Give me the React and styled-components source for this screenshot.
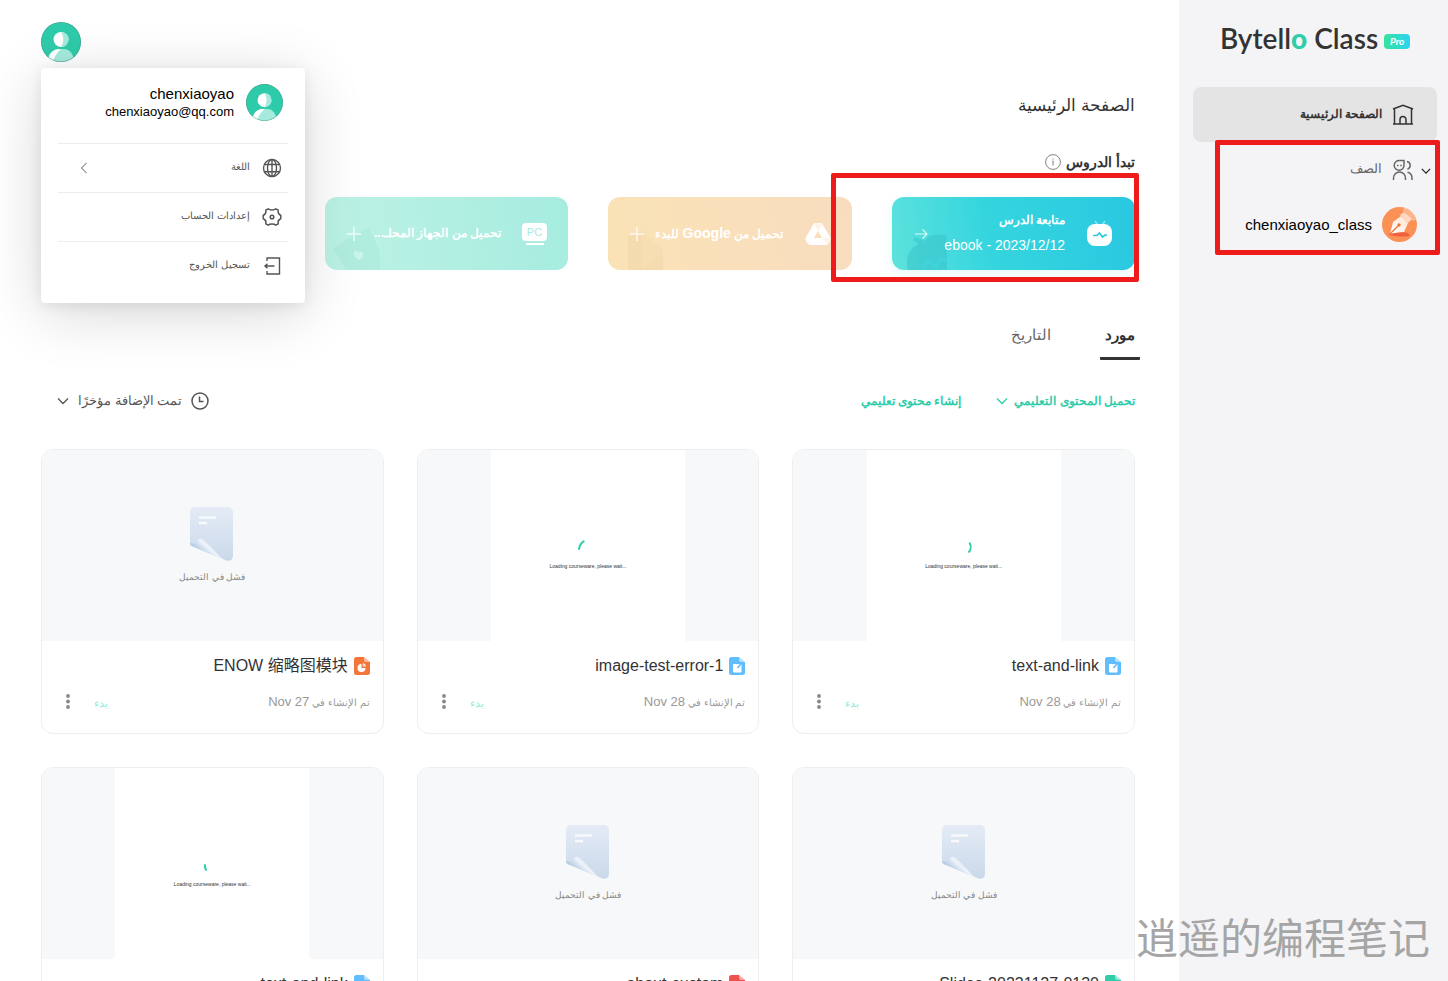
import React from 'react';
import styled, { createGlobalStyle, css } from 'styled-components';

const GlobalStyle = createGlobalStyle`
  *, *::before, *::after { box-sizing: border-box; }
  body {
    margin: 0;
    background: #fff;
    color: #333;
    font-family: "Liberation Sans", "Noto Sans CJK SC", sans-serif;
    font-size: 14px;
  }
  button { font: inherit; color: inherit; background: none; border: 0; padding: 0; cursor: pointer; }
  h1, h2, h3, p, ul { margin: 0; padding: 0; list-style: none; }
  a { color: inherit; text-decoration: none; }
  svg { display: block; flex: none; }
`;

/* ---------- shell ---------- */
const Shell = styled.div`
  display: flex;
  height: 100vh;
  overflow: hidden;
  position: relative;
`;
const Sidebar = styled.aside`
  flex: 0 0 269px;
  background: #f4f4f6;
  padding: 22px 11px 0 14px;
  direction: ltr;
`;
const Main = styled.main`
  flex: 1;
  min-width: 0;
  padding: 22px 44px 0 41px;
`;

/* ---------- sidebar ---------- */
const Logo = styled.a`
  display: flex;
  align-items: center;
  justify-content: center;
  gap: 6px;
  height: 32px;
  margin-bottom: 33px;
  font-family: Lato, "Liberation Sans", sans-serif;
  font-size: 28px;
  font-weight: 600;
  line-height: 32px;
  color: #333;
`;
const LogoAccent = styled.span`
  color: #2ecdaa;
  font-weight: 900;
`;
const ProBadge = styled.span`
  width: 26px;
  border-radius: 4px;
  background: linear-gradient(90deg, #35e39c, #2bd3f3);
  color: #fff;
  font-size: 10px;
  font-style: italic;
  font-weight: 700;
  line-height: 15px;
  text-align: center;
  margin-top: 6px;
`;
const Nav = styled.nav`
  direction: rtl;
`;
const NavButton = styled.button`
  display: flex;
  align-items: center;
  gap: 10px;
  width: 100%;
  height: 55px;
  padding-right: 23px;
  border-radius: 8px;
  line-height: 20px;
  font-size: 13px;
  color: #666;
  position: relative;
  ${({ $active }) => $active && css`
    background: #e4e4e4;
    color: #333;
    font-size: 12px;
    font-weight: 700;
  `}
`;
const NavText = styled.span`
  padding-bottom: 2px;
`;
const NavChevron = styled.span`
  position: absolute;
  right: 6px;
  top: 24px;
  color: #222;
`;
const ClassGroup = styled.div`
  position: relative;
`;
const ClassButton = styled(NavButton)`
  padding-right: 20px;
  color: #000;
  font-size: 15px;
`;
const Highlight = styled.span`
  position: absolute;
  inset: ${({ $inset }) => $inset};
  border: 5px solid #ee1b1b;
  border-radius: 2px;
  pointer-events: none;
  z-index: 2;
`;

/* ---------- account ---------- */
const Header = styled.header`
  display: flex;
  justify-content: flex-end;
`;
const Account = styled.div`
  position: relative;
  height: 40px;
`;
const Menu = styled.div`
  position: absolute;
  z-index: 3;
  top: 46px;
  left: 0;
  width: 264px;
  padding: 0 17px 13px;
  background: #fff;
  border-radius: 4px;
  box-shadow: 0 10px 60px rgba(0, 0, 0, 0.16), 0 3px 14px rgba(0, 0, 0, 0.08);
`;
const Profile = styled.div`
  display: flex;
  align-items: flex-start;
  gap: 12px;
  height: 75px;
  padding: 16px 5px 0 0;
`;
const ProfileText = styled.div`
  padding-top: 1px;
  color: #000;
  text-align: right;
  direction: ltr;
`;
const ProfileName = styled.p`
  font-size: 15px;
  line-height: 18px;
`;
const ProfileMail = styled.p`
  font-size: 13px;
  line-height: 18px;
`;
const MenuItem = styled.button`
  display: flex;
  align-items: center;
  gap: 12px;
  width: 100%;
  height: 49px;
  padding: 0 6px 0 20px;
  border-top: 1px solid #ebedf0;
  color: #555;
  font-size: 10px;
  line-height: 16px;
`;
const MenuLabel = styled.span`
  flex: 1;
  text-align: right;
  padding-bottom: 2px;
`;

/* ---------- start lesson ---------- */
const Title = styled.h1`
  margin-top: 32px;
  font-size: 17px;
  font-weight: 400;
  line-height: 24px;
`;
const SectionTitle = styled.h2`
  display: flex;
  align-items: center;
  gap: 5px;
  margin-top: 32px;
  font-size: 14px;
  font-weight: 700;
  line-height: 24px;
`;
const Actions = styled.div`
  display: grid;
  grid-template-columns: repeat(4, 1fr);
  gap: 40px;
  margin-top: 23px;
`;
const ActionSlot = styled.div`
  position: relative;
`;
const fills = {
  live: 'linear-gradient(80deg, #5de2dc 0%, #35d5df 40%, #2ac8e1 100%)',
  drive: 'linear-gradient(80deg, #fae2b6 0%, #f9dfbb 60%, #f8dcbf 100%)',
  local: 'linear-gradient(80deg, #bcf3e6 0%, #b4f0e3 40%, #a5ecdf 100%)',
};
const ActionCard = styled.button`
  position: relative;
  display: flex;
  align-items: center;
  width: 100%;
  height: 73px;
  padding: 0 21px;
  overflow: hidden;
  border-radius: 12px;
  background: ${({ $kind }) => fills[$kind]};
  box-shadow: ${({ $kind }) => ($kind === 'live' ? '0 4px 12px rgba(43, 200, 224, 0.12)' : 'none')};
  color: #fff;
`;
const ActionText = styled.span`
  position: relative;
  flex: 1;
  padding-right: 21px;
  text-align: right;
  white-space: nowrap;
  font-size: 12px;
  font-weight: 600;
  line-height: 25px;
`;
const ActionLine = styled.span`
  display: block;
  font-weight: ${({ $strong }) => ($strong ? 600 : 400)};
`;
const ActionLatin = styled.bdi`
  font-size: 14px;
  line-height: 25px;
`;
const Motif = styled.svg`
  position: absolute;
  left: 0;
  bottom: 0;
`;
const ActionGlyph = styled.span`
  position: relative;
  opacity: 0.8;
`;

/* ---------- tabs and toolbar ---------- */
const Tabs = styled.div`
  display: flex;
  gap: 49px;
  margin: 53px -5px 0;
`;
const Tab = styled.button`
  min-width: 40px;
  padding-bottom: 10px;
  border-bottom: 3px solid ${({ $active }) => ($active ? '#333' : 'transparent')};
  border-radius: 1px;
  color: ${({ $active }) => ($active ? '#333' : '#666')};
  font-size: 15px;
  font-weight: ${({ $active }) => ($active ? 700 : 400)};
  line-height: 24px;
`;
const Toolbar = styled.div`
  display: flex;
  align-items: center;
  height: 32px;
  margin-top: 25px;
`;
const ToolLink = styled.button`
  display: flex;
  align-items: center;
  gap: 6px;
  margin-left: 35px;
  color: #2ecdaa;
  font-size: 12px;
  font-weight: 600;
  line-height: 20px;
`;
const SortButton = styled.button`
  display: flex;
  align-items: center;
  gap: 9px;
  margin: 0 auto 0 16px;
  color: #555;
  font-size: 13px;
  line-height: 20px;
`;

/* ---------- resources ---------- */
const Grid = styled.div`
  display: grid;
  grid-template-columns: repeat(3, 1fr);
  gap: 33px;
  margin-top: 32px;
`;
const Card = styled.article`
  border: 1px solid #eceef0;
  border-radius: 12px;
  overflow: hidden;
  background: #fff;
`;
const Thumb = styled.div`
  display: flex;
  flex-direction: column;
  align-items: center;
  height: 191px;
  background: #f6f8fa;
`;
const Failed = styled.p`
  margin-top: 8px;
  color: #888;
  font-size: 9px;
  line-height: 16px;
`;
const FailedIcon = styled.svg`
  margin-top: 57px;
`;
const Preview = styled.div`
  display: flex;
  flex-direction: column;
  align-items: center;
  width: 57%;
  height: 100%;
  padding-top: 89px;
  background: #fff;
`;
const PreviewText = styled.p`
  direction: ltr;
  margin-top: 5px;
  color: #333;
  font-size: 5px;
  line-height: 8px;
`;
const CardBody = styled.div`
  height: 92px;
  padding: 13px 13px 0 20px;
`;
const CardTitle = styled.h3`
  display: flex;
  align-items: center;
  gap: 6px;
  font-size: 16px;
  font-weight: 400;
  line-height: 24px;
`;
const CardMeta = styled.div`
  display: flex;
  align-items: center;
  margin-top: 14px;
  color: #999;
  font-size: 10px;
  line-height: 20px;
`;
const MetaDate = styled.bdi`
  font-size: 13px;
`;
const StartButton = styled.button`
  margin: 0 auto 0 0;
  color: #93ead6;
  font-size: 11px;
  line-height: 20px;
`;
const MoreButton = styled.button`
  width: 12px;
  height: 20px;
  margin-right: 20px;
  color: #888;
`;
const Watermark = styled.p`
  position: absolute;
  z-index: 4;
  right: 18px;
  bottom: 15px;
  color: #a5a5a5;
  font-family: "Noto Sans CJK SC", sans-serif;
  font-size: 42px;
  line-height: 60px;
  white-space: nowrap;
  pointer-events: none;
`;

/* ---------- drawings ---------- */
const Person = ({ size }) => (
  <svg width={size} height={size} viewBox="0 0 40 40" aria-hidden="true">
    <defs><clipPath id="face"><circle cx="20" cy="20" r="20" /></clipPath></defs>
    <g clipPath="url(#face)">
      <rect width="40" height="40" fill="#2ecbaa" />
      <circle cx="20" cy="17.500" r="7.500" fill="#fff" />
      <path d="M20 10a7.500 7.500 0 0 1 0 15c3-4 3-11 0-15z" fill="#a4ebdd" />
      <path d="M7 38c1-7 5-11 12-11h4c6 0 9 5 10 11l-5 3H12z" fill="#a4ebdd" />
      <path d="M7 38c1-7 5-11 12-11h1c-3 3-7 7-8 14z" fill="#fff" />
      <circle cx="20" cy="20" r="19.700" fill="none" stroke="#5a8f84" strokeWidth=".6" />
    </g>
  </svg>
);
const Chevron = ({ w = 12, down = true, stroke = 1.3 }) => (
  <svg width={w} height={w} viewBox="0 0 12 12" fill="none" stroke="currentColor" strokeWidth={stroke} aria-hidden="true">
    <path d={down ? 'M1 3.500l5 5 5-5' : 'M8.500 1l-5 5 5 5'} />
  </svg>
);
const HomeIcon = () => (
  <svg width="22" height="22" viewBox="0 0 22 22" fill="none" stroke="#333" strokeWidth="1.500" aria-hidden="true">
    <path d="M1 5l10-3.700L21 5M2.500 4.500V20M19.500 4.500V20M1 20h20M8 20v-4.500a3 3 0 0 1 6 0V20" />
  </svg>
);
const ClassIcon = () => (
  <svg width="22" height="22" viewBox="0 0 22 22" fill="none" stroke="#666" strokeWidth="1.500" aria-hidden="true">
    <path d="M7.500 1.500H12v4.700a4.900 4.900 0 1 1-4.500-4.700zM1.500 21v-2a6 6 0 0 1 12 0v2M15 2.500a4 4 0 0 1 .5 7.700M15.500 13.300c3 .6 4.500 3 4.500 6V21" />
    <path d="M5.800 5.800v1.500M9 5.800v1.500" />
  </svg>
);
const PenAvatar = () => (
  <svg width="35" height="35" viewBox="0 0 35 35" aria-hidden="true">
    <defs>
      <clipPath id="pen"><circle cx="17.500" cy="17.500" r="17.500" /></clipPath>
      <linearGradient id="nib" x1="0" y1="1" x2="1" y2="0"><stop offset="0" stopColor="#fff" /><stop offset="1" stopColor="#ffe3d0" /></linearGradient>
    </defs>
    <g clipPath="url(#pen)">
      <rect width="35" height="35" fill="#fc9156" />
      <path d="M22 1l13 13V0z" fill="#fff" opacity=".85" />
      <path d="M20 3l11 11 4-2V7L27 0z" fill="#fcb48c" />
      <path d="M22 5l8 7-4 4-8-8z" fill="#ffd9c2" />
      <path d="M8 27l3-12 8-6 7 7-4 9z" fill="url(#nib)" />
      <path d="M8 27l8-8" stroke="#f4733a" strokeWidth="1.200" />
      <circle cx="17" cy="18" r="1.700" fill="#f4733a" />
      <path d="M6 27c6 0 13-3 20-1l2 3c-7 1-16 1-22-2z" fill="#f0603f" />
    </g>
  </svg>
);
const GlobeIcon = () => (
  <svg width="20" height="20" viewBox="0 0 20 20" fill="none" stroke="#555" strokeWidth="1.400" aria-hidden="true">
    <circle cx="10" cy="10" r="8.500" /><ellipse cx="10" cy="10" rx="4.500" ry="8.500" />
    <path d="M10 1.500v17M2.500 6.500h15M2.500 13.700h15" />
  </svg>
);
const GearIcon = () => (
  <svg width="20" height="20" viewBox="0 0 20 20" fill="none" stroke="#555" strokeWidth="1.500" strokeLinejoin="round" aria-hidden="true">
    <path d="M6.200 1.800c1.500 1.600 6.100 1.600 7.600 0l2.400 1.400c-.6 2.600.3 4 2.600 5.300v3c-2.300 1.300-3.200 2.700-2.600 5.300l-2.400 1.400c-1.500-1.600-6.100-1.600-7.600 0l-2.400-1.400c.6-2.600-.3-4-2.600-5.300v-3c2.300-1.300 3.200-2.700 2.600-5.300z" />
    <circle cx="10" cy="10" r="1.800" />
  </svg>
);
const ExitIcon = () => (
  <svg width="20" height="20" viewBox="0 0 20 20" fill="none" stroke="#555" strokeWidth="1.400" aria-hidden="true">
    <path d="M5 5v-3h12.500v16H5v-3M12.500 10H3M5.500 7.800L3 10l2.500 2.200" />
  </svg>
);
const InfoIcon = () => (
  <svg width="16" height="16" viewBox="0 0 16 16" fill="none" stroke="#777" aria-hidden="true">
    <circle cx="8" cy="8" r="7.400" strokeWidth=".9" /><path d="M8 4.500v1M8 6.500v5" />
  </svg>
);
const ClockIcon = () => (
  <svg width="18" height="18" viewBox="0 0 18 18" fill="none" stroke="#555" strokeWidth="1.500" aria-hidden="true">
    <circle cx="9" cy="9" r="8" /><path d="M8.500 4.500v5h4" />
  </svg>
);
const LiveIcon = () => (
  <svg width="28" height="28" viewBox="0 0 28 28" aria-hidden="true">
    <path d="M9 1l3 4M19 1l-3 4" stroke="#8be4ee" strokeWidth="1.500" />
    <rect x="1" y="4" width="25" height="22" rx="8" fill="#fff" />
    <path d="M7 15.500h4l2.500-2.500 3 4 2.500-2h2" fill="none" stroke="#2bc8dd" strokeWidth="1.700" />
  </svg>
);
const DriveIcon = () => (
  <svg width="26" height="24" viewBox="0 0 26 24" aria-hidden="true">
    <path d="M11 1h4c1 0 2 0 3 2l7 12c1 2 0 3 0 4l-2 3c-1 1-2 1-3 1H6c-1 0-2 0-3-1l-2-3c0-1-1-2 0-4L8 3c1-2 2-2 3-2z" fill="#fff" />
    <path d="M13 9l4 7H9z" fill="#f9dfbb" />
    <path d="M9 2l4 7 4-7c-3-1-5-1-8 0z" fill="#fdf3e6" /><path d="M17 16h8.500l-3 6z" fill="#fdf3e6" />
  </svg>
);
const PcScreen = styled.span`
  display: block;
  width: 25px;
  height: 18px;
  border-radius: 4px;
  background: #fff;
  color: #a5ecdf;
  font-size: 11px;
  font-weight: 400;
  line-height: 19px;
  text-align: center;
`;
const PcStand = styled.span`
  display: block;
  width: 18px;
  height: 2px;
  margin: 2px auto 0;
  background: #fff;
`;
const PlusIcon = () => (
  <svg width="16" height="16" viewBox="0 0 16 16" stroke="#fff" strokeWidth="1.500" aria-hidden="true"><path d="M8 1v14M1 8h14" /></svg>
);
const ArrowIcon = () => (
  <svg width="16" height="12" viewBox="0 0 16 12" fill="none" stroke="#fff" strokeWidth="1.200" aria-hidden="true"><path d="M2 6h12M9.500 1.500L14 6l-4.500 4.500" /></svg>
);
const motifs = {
  live: (
    <g>
      <path d="M16 73c-3-12 1-22 11-26l-6-4 2-3 10 4 4-5c6-2 13-2 18 0v34z" fill="#2fb9c4" opacity=".4" />
      <path d="M31 73l4-9 9 6 4-8 7 1" fill="none" stroke="#3ed4dc" strokeWidth="3" />
    </g>
  ),
  drive: (
    <g fill="#ecd0a0" opacity=".35">
      <path d="M20 39l14-5 21 19v20H20z" opacity=".6" /><path d="M20 39l14-5v39H20z" /><path d="M34 73l21-16v16z" />
    </g>
  ),
  local: (
    <g>
      <path d="M8 51l30-18 7-2 10 22v20H21z" fill="#a0e4d4" opacity=".35" />
      <path d="M45 31l10 22" stroke="#cdf6ec" opacity=".6" />
      <path d="M29 55c-1 4 2 6 5 8 3-2 6-6 3-8-2-1-3 0-3 1-1-2-3-3-5-1z" fill="#c8f6ec" />
    </g>
  ),
};
const CardMotif = ({ kind }) => (
  <Motif width="60" height="73" viewBox="0 0 60 73" aria-hidden="true">{motifs[kind]}</Motif>
);
const BrokenPage = () => (
  <FailedIcon width="44" height="54" viewBox="0 0 44 54" aria-hidden="true">
    <defs>
      <linearGradient id="sheet" x1="0" y1="0" x2="0" y2="1"><stop offset="0" stopColor="#e4ebf6" /><stop offset="1" stopColor="#c9d9ea" /></linearGradient>
      <linearGradient id="curl" gradientUnits="userSpaceOnUse" x1="10" y1="44" x2="19" y2="34"><stop offset="0" stopColor="#b9cee5" /><stop offset=".6" stopColor="#eef3f9" /><stop offset="1" stopColor="#dbe5f1" /></linearGradient>
    </defs>
    <path d="M6 0h32a5 5 0 0 1 5 5v43c0 5-3 7-8 5L4 40c-3-1-4-2-4-4V5a5 5 0 0 1 6-5z" fill="url(#sheet)" />
    <path d="M0 36c0 2 1 3 4 4l31 13c-4-2-7-5-10-9L14 33c-2-2-4-1-6 0-2 3-4 4-8 3z" fill="url(#curl)" />
    <path d="M9 10.500h17M9 16h8" stroke="#f7f9fc" strokeWidth="2.500" />
  </FailedIcon>
);
const arcs = {
  top: 'M1 12a12 12 0 0 1 6-10',
  right: 'M17 4a9 9 0 0 1-1 11',
  left: 'M3 8c0 3 0 5 2 7',
};
const Spinner = ({ arc }) => (
  <svg width="20" height="18" viewBox="0 0 22 20" fill="none" stroke="#2ecdaa" strokeWidth="2.200" aria-hidden="true">
    <path d={arcs[arc]} />
  </svg>
);
const FileIcon = ({ color, kind }) => (
  <svg width="16" height="18" viewBox="0 0 16 18" aria-hidden="true">
    <path d="M2.500 0H10l6 5v10.500a2.500 2.500 0 0 1-2.500 2.500h-11A2.500 2.500 0 0 1 0 15.500v-13A2.500 2.500 0 0 1 2.500 0z" fill={color} />
    <path d="M10 0l6 5h-4a2 2 0 0 1-2-2z" fill="#fff" opacity=".5" />
    {kind === 'pie' ? (
      <g fill="#fff"><path d="M7.500 7v4h4a4 4 0 1 1-4-4z" /><path d="M8.700 6.200A3.500 3.500 0 0 1 12 9.500H8.700z" opacity=".8" /></g>
    ) : (
      <g><path d="M4 7h8.500v7.500a1 1 0 0 1-1 1H5a1 1 0 0 1-1-1z" fill="#fff" /><path d="M8.500 11L13 5.500" stroke={color} strokeWidth="1.600" /></g>
    )}
  </svg>
);
const DotsIcon = () => (
  <svg width="12" height="20" viewBox="0 0 12 20" fill="currentColor" aria-hidden="true">
    <circle cx="6" cy="3" r="1.900" /><circle cx="6" cy="8.500" r="1.900" /><circle cx="6" cy="14" r="1.900" />
  </svg>
);

/* ---------- data ---------- */
const resources = [
  { title: 'text-and-link', date: 'Nov 28', arc: 'right', color: '#62bdff', kind: 'note' },
  { title: 'image-test-error-1', date: 'Nov 28', arc: 'top', color: '#62bdff', kind: 'note' },
  { title: 'ENOW 缩略图模块', date: 'Nov 27', color: '#f4763a', kind: 'pie' },
  { title: 'Slides-20231127-0130', date: 'Nov 27', color: '#2ecdaa', kind: 'note' },
  { title: 'about-custom', date: 'Nov 27', color: '#f0524f', kind: 'note' },
  { title: 'text-and-link', date: 'Nov 27', arc: 'left', color: '#62bdff', kind: 'note' },
];

const Resource = ({ title, date, arc, color, kind }) => (
  <Card>
    <Thumb>
      {arc ? (
        <Preview>
          <Spinner arc={arc} />
          <PreviewText>Loading courseware, please wait...</PreviewText>
        </Preview>
      ) : (
        <>
          <BrokenPage />
          <Failed>فشل في التحميل</Failed>
        </>
      )}
    </Thumb>
    <CardBody>
      <CardTitle><FileIcon color={color} kind={kind} /><bdi>{title}</bdi></CardTitle>
      <CardMeta>
        <span>تم الإنشاء في <MetaDate>{date}</MetaDate></span>
        <StartButton type="button">بدء</StartButton>
        <MoreButton type="button" aria-label="المزيد"><DotsIcon /></MoreButton>
      </CardMeta>
    </CardBody>
  </Card>
);

export default function App() {
  return (
    <>
      <GlobalStyle />
      <Shell dir="rtl" lang="ar">
        <Sidebar>
          <Logo href="#">
            <span>Bytell<LogoAccent>o</LogoAccent> Class</span>
            <ProBadge>Pro</ProBadge>
          </Logo>
          <Nav>
            <NavButton type="button" $active><HomeIcon /><NavText>الصفحة الرئيسية</NavText></NavButton>
            <ClassGroup>
              <NavButton type="button">
                <NavChevron><Chevron w={10} stroke={1.5} /></NavChevron>
                <ClassIcon /><NavText>الصف</NavText>
              </NavButton>
              <ClassButton type="button"><PenAvatar /><bdi>chenxiaoyao_class</bdi></ClassButton>
              <Highlight $inset="-2px -3px -3px 22px" />
            </ClassGroup>
          </Nav>
        </Sidebar>
        <Main>
          <Header>
            <Account>
              <button type="button" aria-label="chenxiaoyao"><Person size={40} /></button>
              <Menu>
                <Profile>
                  <Person size={37} />
                  <ProfileText>
                    <ProfileName>chenxiaoyao</ProfileName>
                    <ProfileMail>chenxiaoyao@qq.com</ProfileMail>
                  </ProfileText>
                </Profile>
                <MenuItem type="button"><GlobeIcon /><MenuLabel>اللغة</MenuLabel><Chevron down={false} stroke={1} /></MenuItem>
                <MenuItem type="button"><GearIcon /><MenuLabel>إعدادات الحساب</MenuLabel></MenuItem>
                <MenuItem type="button"><ExitIcon /><MenuLabel>تسجيل الخروج</MenuLabel></MenuItem>
              </Menu>
            </Account>
          </Header>
          <Title>الصفحة الرئيسية</Title>
          <SectionTitle>تبدأ الدروس<InfoIcon /></SectionTitle>
          <Actions>
            <ActionSlot>
              <ActionCard type="button" $kind="live">
                <CardMotif kind="live" />
                <LiveIcon />
                <ActionText>
                  <ActionLine $strong>متابعة الدرس</ActionLine>
                  <ActionLine><ActionLatin>ebook - 2023/12/12</ActionLatin></ActionLine>
                </ActionText>
                <ActionGlyph><ArrowIcon /></ActionGlyph>
              </ActionCard>
              <Highlight $inset="-24px -4px -12px -61px" />
            </ActionSlot>
            <ActionCard type="button" $kind="drive">
              <CardMotif kind="drive" />
              <DriveIcon />
              <ActionText>تحميل من <ActionLatin>Google</ActionLatin> للبدء</ActionText>
              <ActionGlyph><PlusIcon /></ActionGlyph>
            </ActionCard>
            <ActionCard type="button" $kind="local">
              <CardMotif kind="local" />
              <span><PcScreen>PC</PcScreen><PcStand /></span>
              <ActionText>تحميل من الجهاز المحلـ...</ActionText>
              <ActionGlyph><PlusIcon /></ActionGlyph>
            </ActionCard>
          </Actions>
          <Tabs role="tablist">
            <Tab type="button" role="tab" aria-selected="true" $active>مورد</Tab>
            <Tab type="button" role="tab" aria-selected="false">التاريخ</Tab>
          </Tabs>
          <Toolbar>
            <ToolLink type="button">تحميل المحتوى التعليمي<Chevron /></ToolLink>
            <ToolLink type="button">إنشاء محتوى تعليمي</ToolLink>
            <SortButton type="button"><ClockIcon />تمت الإضافة مؤخرًا<Chevron /></SortButton>
          </Toolbar>
          <Grid>
            {resources.map((item, i) => <Resource key={i} {...item} />)}
          </Grid>
        </Main>
        <Watermark lang="zh">逍遥的编程笔记</Watermark>
      </Shell>
    </>
  );
}
